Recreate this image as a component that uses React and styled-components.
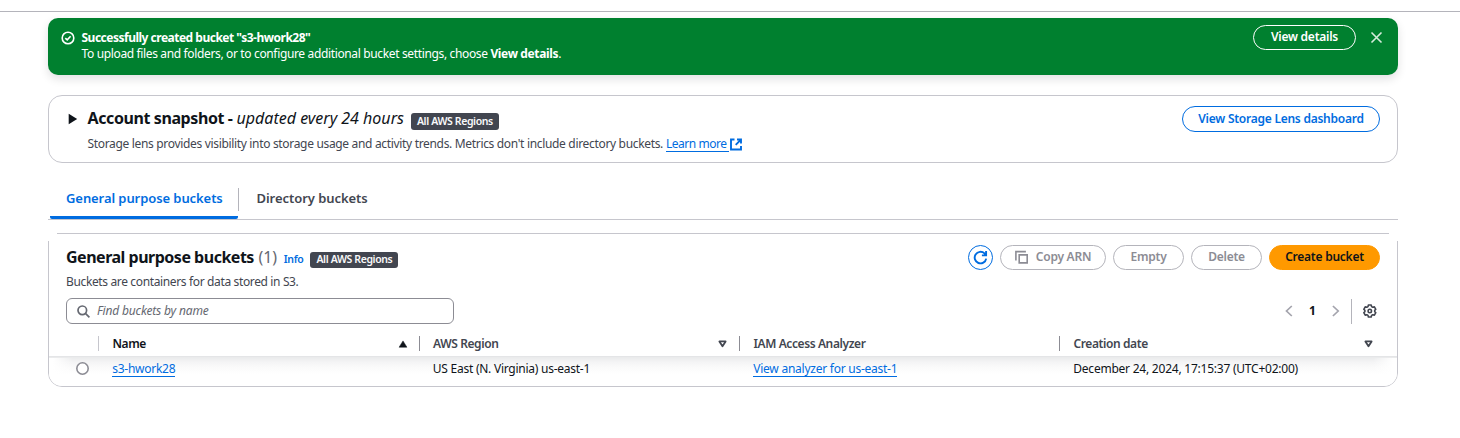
import React from "react";
import styled, { createGlobalStyle, css } from "styled-components";

const GlobalStyle = createGlobalStyle`
  *, *::before, *::after { box-sizing: border-box; }
  body {
    margin: 0;
    background: #fff;
    color: #0f141a;
    font-family: "Noto Sans", "Open Sans", sans-serif;
    font-size: 12px;
    line-height: 16px;
  }
  button, input { font: inherit; }
`;

const Page = styled.div`
  display: flex;
  flex-direction: column;
  height: 438px;
  overflow: hidden;
`;

const TopRule = styled.div`
  flex: none;
  height: 12px;
  border-bottom: 1px solid #b4b4bb;
`;

const Main = styled.main`
  display: flex;
  flex-direction: column;
  width: 1350px;
  margin-left: 48px;
  padding-top: 6px;
`;

const Text = styled.span`
  display: block;
  white-space: nowrap;
  font-size: ${(p) => p.$size || 12}px;
  font-weight: ${(p) => p.$weight || 400};
  letter-spacing: ${(p) => p.$track || 0}px;
  color: ${(p) => p.$color || "inherit"};
`;

const Flash = styled.section`
  display: flex;
  height: 57px;
  padding: 7px 15px 0 12.5px;
  border-radius: 10px;
  background: #00802f;
  color: #fff;
  box-shadow: 0 4px 10px rgba(0, 7, 22, 0.12);
`;

const FlashIcon = styled.svg`
  flex: none;
  margin: 6px 7px 0 0;
`;

const FlashBody = styled.div`
  flex: 1;
  padding-top: 5px;
`;

const Button = styled.button`
  display: flex;
  flex: none;
  align-items: center;
  justify-content: center;
  gap: 7px;
  width: ${(p) => p.$width}px;
  height: ${(p) => p.$height || 25}px;
  padding: 0 0 1px;
  border: 1.3px solid #006ce0;
  border-radius: 14px;
  background: #fff;
  color: #006ce0;
  ${(p) => p.$kind === "flash" && css`
    background: transparent;
    border-color: #fff;
    color: #fff;
  `}
  ${(p) => p.$kind === "disabled" && css`
    border-color: #b4b4bb;
    color: #8c8c94;
  `}
  ${(p) => p.$kind === "primary" && css`
    border-color: #ff9900;
    background: #ff9900;
    color: #0f141a;
  `}
`;

const IconButton = styled(Button)`
  padding: 0;
`;

const Dismiss = styled.button`
  display: flex;
  width: 13px;
  height: 13px;
  margin: 6px 0 0 14px;
  padding: 0;
  border: 0;
  background: none;
`;

const Snapshot = styled.section`
  display: flex;
  height: 68px;
  margin-top: 20px;
  padding: 10px 17px 0 19px;
  border: 1px solid #c6c6cd;
  border-radius: 14px;
`;

const Caret = styled.svg`
  flex: none;
  margin: 7px 9.5px 0 0;
`;

const SnapshotBody = styled.div`
  flex: 1;
`;

const TitleRow = styled.div`
  display: flex;
  align-items: center;
  height: 24px;
`;

const Heading = styled.h2`
  margin: 0;
  white-space: nowrap;
  font-size: 16px;
  line-height: 24px;
  font-weight: 700;
  letter-spacing: ${(p) => p.$track}px;
`;

const Updated = styled.em`
  margin-left: 4px;
  white-space: nowrap;
  font-size: 16px;
  letter-spacing: ${(p) => p.$track}px;
`;

const Count = styled.span`
  margin-left: 4.5px;
  font-size: 16px;
  color: #656871;
`;

const Info = styled.a`
  margin: 4px 0 0 6.5px;
  font-size: 10.5px;
  font-weight: 600;
  letter-spacing: -0.3px;
  color: #006ce0;
`;

const Badge = styled.span`
  display: flex;
  align-items: center;
  justify-content: center;
  width: 88px;
  height: ${(p) => p.$height || 16}px;
  margin: ${(p) => p.$top || 0}px 0 0 ${(p) => p.$left}px;
  padding-bottom: 2px;
  border-radius: 3px;
  background: #424650;
  color: #f9f9fa;
`;

const Line = styled.div`
  display: flex;
  align-items: center;
  margin-top: ${(p) => p.$top || 0}px;
  color: #424650;
`;

const Link = styled.a`
  display: inline-block;
  height: 16px;
  margin-left: ${(p) => p.$left || 0}px;
  padding-right: ${(p) => p.$pad || 0}px;
  border-bottom: 1px solid #006ce0;
  color: #006ce0;
  text-decoration: none;
`;

const Tabs = styled.nav`
  display: flex;
  height: 37px;
  margin-top: 20px;
  padding-left: 2px;
  border-bottom: 1px solid #c6c6cd;
`;

const Tab = styled.div`
  display: flex;
  width: ${(p) => p.$width}px;
  height: 36px;
  padding: 7px 0 0 ${(p) => (p.$active ? 16 : 17.5)}px;
  color: ${(p) => (p.$active ? "#006ce0" : "#424650")};
  border-bottom: 3px solid ${(p) => (p.$active ? "#006ce0" : "transparent")};
  border-radius: 2px;
`;

const Divider = styled.i`
  flex: none;
  width: 1px;
  height: ${(p) => p.$height}px;
  margin: ${(p) => p.$margin || 0};
  background: #b4b4bb;
`;

const Container = styled.section`
  position: relative;
  height: 154px;
  margin-top: 13px;
  border: 1px solid #c6c6cd;
  border-radius: 4px 4px 14px 14px;
  &::before, &::after {
    content: "";
    position: absolute;
    top: -1px;
    width: 9px;
    height: 8px;
    background: #fff;
  }
  &::before { left: -1px; }
  &::after { right: -1px; }
`;

const ContainerHead = styled.header`
  display: flex;
  justify-content: space-between;
  height: 64px;
  padding: 11px 17px 0;
`;

const Actions = styled.div`
  display: flex;
  gap: 7px;
`;

const Filters = styled.div`
  display: flex;
  justify-content: space-between;
  padding: 0 20px 0 17px;
`;

const Search = styled.label`
  display: flex;
  align-items: center;
  gap: 7px;
  width: 388px;
  height: 26px;
  padding: 0 10px;
  border: 1px solid #8c8c94;
  border-radius: 6px;
`;

const SearchInput = styled.input`
  flex: 1;
  padding: 0;
  border: 0;
  outline: 0;
  background: none;
  letter-spacing: -0.16px;
  &::placeholder {
    color: #656871;
    font-style: italic;
    opacity: 1;
  }
`;

const Pager = styled.div`
  display: flex;
  align-items: center;
`;

const PageNumber = styled.span`
  width: 8px;
  margin: 0 15.5px 0 16px;
  text-align: center;
  font-weight: 700;
`;

const Row = styled.div`
  display: grid;
  grid-template-columns: 49px 320.5px 320.5px 320px 338px;
  height: ${(p) => p.$height}px;
  ${(p) => p.$head && css`
    color: #424650;
    border-bottom: 1px solid #e4e5e7;
  `}
  ${(p) => !p.$head && css`
    background:
      linear-gradient(90deg, #fff 4px, transparent 24px, transparent calc(100% - 24px), #fff calc(100% - 4px)) 0 1px no-repeat,
      linear-gradient(#e9eaeb, #f4f4f5 5px, #fafafa 10px, #fff 17px);
    border-radius: 0 0 13px 13px;
  `}
`;

const HeadCell = styled.div`
  display: flex;
  align-items: center;
  justify-content: space-between;
  height: 15px;
  margin-top: 12px;
  padding: 0 ${(p) => p.$right || 11}px 0 13.5px;
  border-left: 1px solid ${(p) => p.$rule || "#8c8c94"};
  color: ${(p) => (p.$sorted ? "#0f141a" : "inherit")};
`;

const Cell = styled.div`
  padding: 4px 0 0 14.3px;
`;

const Radio = styled.span`
  display: block;
  width: 13px;
  height: 13px;
  margin: 5px 0 0 27px;
  border-radius: 50%;
  background: #fff;
  box-shadow: inset 0 0 0 1.6px #8c8c94;
`;

const ButtonText = ({ children }) => (
  <Text $weight={600} $track={-0.25}>{children}</Text>
);

const HeadText = ({ children }) => (
  <Text $weight={600} $track={-0.4}>{children}</Text>
);

const SortAsc = () => (
  <svg width="10" height="8" viewBox="0 0 10 8">
    <path d="M5 .9 8.9 7.2H1.1Z" fill="#0f141a" stroke="#0f141a" strokeWidth=".5" strokeLinejoin="round" />
  </svg>
);

const SortNone = () => (
  <svg width="9" height="8" viewBox="0 0 9 8">
    <path d="M1.4 1.4h6.2L4.5 6.2Z" fill="none" stroke="#424650" strokeWidth="1.8" strokeLinejoin="round" />
  </svg>
);

export default function App() {
  return (
    <Page>
      <GlobalStyle />
      <TopRule />
      <Main>
        <Flash>
          <FlashIcon width="14" height="14" viewBox="0 0 14 14" fill="none" stroke="#fff" strokeWidth="1.6">
            <circle cx="7" cy="7" r="5.8" />
            <path d="m4.3 7.1 1.9 1.8 3.4-3.7" />
          </FlashIcon>
          <FlashBody>
            <Text $weight={700} $track={-0.5}>Successfully created bucket "s3-hwork28"</Text>
            <Text $track={-0.355}>
              To upload files and folders, or to configure additional bucket settings, choose <b>View details</b>.
            </Text>
          </FlashBody>
          <Button $kind="flash" $width={103}><ButtonText>View details</ButtonText></Button>
          <Dismiss aria-label="Dismiss">
            <svg width="13" height="13" viewBox="0 0 13 13" stroke="#d6ecdc" strokeWidth="1.6">
              <path d="m1.5 1.5 10 10m0-10-10 10" />
            </svg>
          </Dismiss>
        </Flash>

        <Snapshot>
          <Caret width="10" height="12" viewBox="0 0 10 12">
            <path d="M.7.7 9.2 6 .7 11.3Z" fill="#0f141a" />
          </Caret>
          <SnapshotBody>
            <TitleRow>
              <Heading $track={-0.4}>Account snapshot -</Heading>
              <Updated $track={0}>updated every 24 hours</Updated>
              <Badge $left={7} $top={7} $height={17}>
                <Text $size={10.5} $weight={600} $track={-0.38}>All AWS Regions</Text>
              </Badge>
            </TitleRow>
            <Line $top={6}>
              <Text $track={-0.327}>
                Storage lens provides visibility into storage usage and activity trends. Metrics don't include directory buckets.
              </Text>
              <Link $left={3} $pad={3}><Text $track={-0.48}>Learn more</Text></Link>
              <svg width="14" height="13" viewBox="0 0 14 13" fill="none" stroke="#006ce0" strokeWidth="1.9">
                <path d="M5.5 1.5H2v10h10V8M8 1.5h4v4M11.7 1.8 6.7 6.8" />
              </svg>
            </Line>
          </SnapshotBody>
          <Button $width={198} $height={26}><ButtonText>View Storage Lens dashboard</ButtonText></Button>
        </Snapshot>

        <Tabs>
          <Tab $active $width={188}><Text $size={13} $weight={600} $track={-0.08}>General purpose buckets</Text></Tab>
          <Divider $height={23} $margin="5px 0 0" />
          <Tab $width={150}><Text $size={13} $weight={600} $track={-0.05}>Directory buckets</Text></Tab>
        </Tabs>

        <Container>
          <ContainerHead>
            <div>
              <TitleRow>
                <Heading $track={-0.49}>General purpose buckets</Heading>
                <Count>(1)</Count>
                <Info>Info</Info>
                <Badge $left={7} $top={5}>
                  <Text $size={10.5} $weight={600} $track={-0.38}>All AWS Regions</Text>
                </Badge>
              </TitleRow>
              <Line $top={5}><Text $track={-0.36}>Buckets are containers for data stored in S3.</Text></Line>
            </div>
            <Actions>
              <IconButton $width={25} aria-label="Refresh">
                <svg width="15" height="15" viewBox="0 0 15 15" fill="none" stroke="#006ce0" strokeWidth="1.9">
                  <path d="M13.2 8.6A5.8 5.8 0 1 1 11.5 3.4l1.2 1.4M13.1 1v4.4H8.9" />
                </svg>
              </IconButton>
              <Button $kind="disabled" $width={106}>
                <svg width="14" height="14" viewBox="0 0 14 14" fill="none" stroke="#8c8c94" strokeWidth="1.6">
                  <path d="M.9 10.5V1.6h10M4.2 4.9h8v8h-8Z" />
                </svg>
                <ButtonText>Copy ARN</ButtonText>
              </Button>
              <Button $kind="disabled" $width={71}><ButtonText>Empty</ButtonText></Button>
              <Button $kind="disabled" $width={71}><ButtonText>Delete</ButtonText></Button>
              <Button $kind="primary" $width={111}><ButtonText>Create bucket</ButtonText></Button>
            </Actions>
          </ContainerHead>

          <Filters>
            <Search>
              <svg width="13" height="13" viewBox="0 0 13 13" fill="none" stroke="#656871" strokeWidth="1.7">
                <circle cx="5.3" cy="5.3" r="4.3" />
                <path d="m8.4 8.4 4 4" />
              </svg>
              <SearchInput placeholder="Find buckets by name" />
            </Search>
            <Pager>
              <svg width="8" height="12" viewBox="0 0 8 12" fill="none" stroke="#a4a4ad" strokeWidth="1.7">
                <path d="M6.8 1 1.5 6l5.3 5" />
              </svg>
              <PageNumber>1</PageNumber>
              <svg width="8" height="12" viewBox="0 0 8 12" fill="none" stroke="#a4a4ad" strokeWidth="1.7">
                <path d="M.9 1 6.2 6 .9 11" />
              </svg>
              <Divider $height={25} $margin="0 11px 0 11px" />
              <svg width="14" height="14" viewBox="0 0 14 14" fill="none" stroke="#424650" strokeWidth="1.6" strokeLinejoin="round">
                <path d="M5.4 1h2.8l.4 1.6 1.2.7 1.6-.4 1.4 2.4-1.1 1.1v1.2l1.1 1.1-1.4 2.4-1.6-.4-1.2.7-.4 1.6H5.4L5 11.4l-1.2-.7-1.6.4L.8 8.7l1.1-1.1V6.4L.8 5.3l1.4-2.4 1.6.4L5 2.6Z" />
                <circle cx="6.8" cy="7" r="1.7" />
              </svg>
            </Pager>
          </Filters>

          <Row $head $height={33}>
            <span />
            <HeadCell $sorted $rule="#c6c6cd"><HeadText>Name</HeadText><SortAsc /></HeadCell>
            <HeadCell $right={12}><HeadText>AWS Region</HeadText><SortNone /></HeadCell>
            <HeadCell><HeadText>IAM Access Analyzer</HeadText></HeadCell>
            <HeadCell $right={24}><HeadText>Creation date</HeadText><SortNone /></HeadCell>
          </Row>
          <Row $height={29}>
            <Radio />
            <Cell><Link><Text $track={-0.27}>s3-hwork28</Text></Link></Cell>
            <Cell><Text $track={-0.25}>US East (N. Virginia) us-east-1</Text></Cell>
            <Cell><Link><Text $track={-0.25}>View analyzer for us-east-1</Text></Link></Cell>
            <Cell><Text $track={-0.23}>December 24, 2024, 17:15:37 (UTC+02:00)</Text></Cell>
          </Row>
        </Container>
      </Main>
    </Page>
  );
}
